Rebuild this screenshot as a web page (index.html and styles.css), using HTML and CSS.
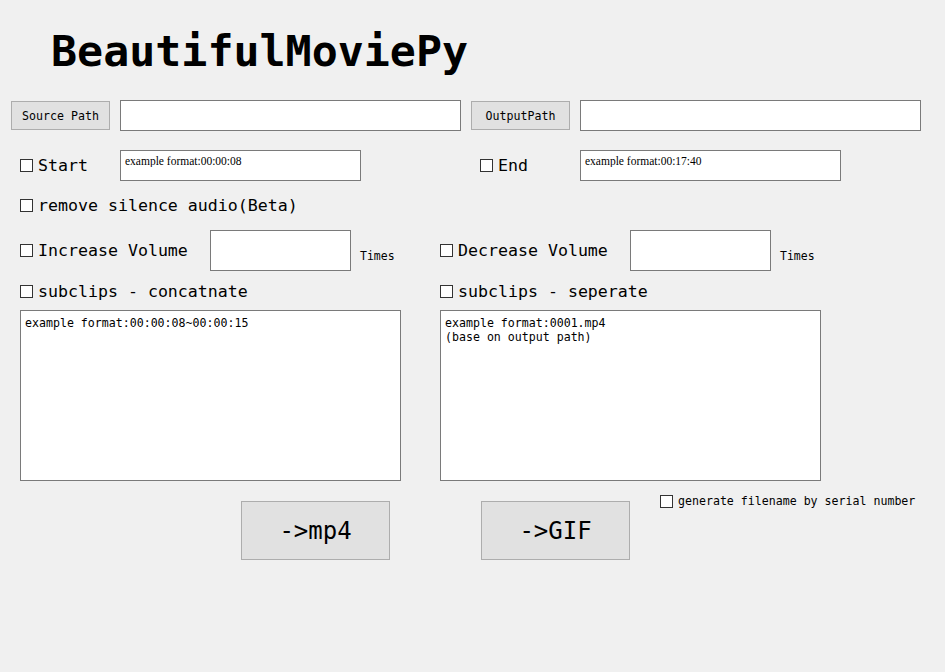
FILE: index.html
```html
<!DOCTYPE html>
<html lang="en">
<head>
<meta charset="utf-8">
<title>BeautifulMoviePy</title>
<link rel="stylesheet" href="styles.css">
</head>
<body>
<div class="window">
  <h1 class="title">BeautifulMoviePy</h1>

  <div class="row row-paths">
    <button class="btn-small">Source Path</button>
    <input class="field field-path" type="text">
    <button class="btn-small">OutputPath</button>
    <input class="field field-path" type="text">
  </div>

  <div class="row row-time">
    <label class="check check-time"><span class="box"></span><span class="lbl">Start</span></label>
    <input class="field field-time field-start" type="text" value="example format:00:00:08">
    <label class="check check-time check-end"><span class="box"></span><span class="lbl">End</span></label>
    <input class="field field-time field-end" type="text" value="example format:00:17:40">
  </div>

  <div class="row row-line">
    <label class="check"><span class="box"></span><span class="lbl">remove silence audio(Beta)</span></label>
  </div>

  <div class="row row-volume">
    <div class="half">
      <label class="check check-vol"><span class="box"></span><span class="lbl">Increase Volume</span></label>
      <input class="field field-vol" type="text">
      <span class="times">Times</span>
    </div>
    <div class="half">
      <label class="check check-vol"><span class="box"></span><span class="lbl">Decrease Volume</span></label>
      <input class="field field-vol" type="text">
      <span class="times">Times</span>
    </div>
  </div>

  <div class="row row-line row-sub">
    <div class="half">
      <label class="check"><span class="box"></span><span class="lbl">subclips - concatnate</span></label>
    </div>
    <div class="half">
      <label class="check"><span class="box"></span><span class="lbl">subclips - seperate</span></label>
    </div>
  </div>

  <div class="row row-areas">
    <div class="half">
      <textarea class="area">example format:00:00:08~00:00:15</textarea>
    </div>
    <div class="half">
      <textarea class="area">example format:0001.mp4
(base on output path)</textarea>
    </div>
  </div>

  <div class="row row-actions">
    <button class="btn-big">-&gt;mp4</button>
    <button class="btn-big">-&gt;GIF</button>
    <label class="check check-small"><span class="box"></span><span class="lbl">generate filename by serial number</span></label>
  </div>
</div>
</body>
</html>
```

FILE: styles.css
```css
* {
  box-sizing: border-box;
}

html, body {
  margin: 0;
  padding: 0;
  background: #f0f0f0;
}

.window {
  width: 945px;
  height: 672px;
  background: #f0f0f0;
  font-family: "DejaVu Sans Mono", "Liberation Mono", monospace;
  color: #000;
  overflow: hidden;
}

.title {
  margin: 30px 0 0 51px;
  height: 43px;
  font-size: 43.3px;
  line-height: 43px;
  font-weight: bold;
  letter-spacing: 0;
}

.row {
  display: flex;
  align-items: center;
}

.row-paths {
  margin-top: 27px;
  height: 31px;
  padding-left: 11px;
}

.btn-small {
  width: 99px;
  height: 29px;
  margin-right: 10px;
  background: #e1e1e1;
  border: 1px solid #adadad;
  border-radius: 0;
  font-family: "DejaVu Sans Mono", monospace;
  font-size: 11.6px;
  color: #000;
  padding: 0;
}

.field {
  background: #fff;
  border: 1px solid #7a7a7a;
  border-radius: 0;
  outline: none;
  margin: 0;
}

.field-path {
  width: 341px;
  height: 31px;
  margin-right: 10px;
}

.row-time {
  margin-top: 19px;
  height: 31px;
  padding-left: 20px;
}

.field-time {
  height: 31px;
  padding: 0 0 10px 4px;
  font-family: "Liberation Serif", serif;
  font-size: 11.5px;
  color: #000;
}

.field-start {
  width: 241px;
  margin-right: 119px;
}

.field-end {
  width: 261px;
}

.check {
  display: flex;
  align-items: center;
  gap: 5px;
  font-size: 16.6px;
}

.check-time {
  width: 100px;
}

.box {
  display: block;
  width: 13px;
  height: 13px;
  border: 1px solid #333;
  background: #fff;
  flex: none;
}

.row-line {
  margin-top: 14px;
  height: 20px;
  padding-left: 20px;
}

.row-sub {
  margin-top: 10px;
}

.half {
  width: 420px;
  display: flex;
  align-items: center;
  height: 100%;
}

.row-volume {
  margin-top: 15px;
  height: 41px;
  padding-left: 20px;
}

.check-vol {
  width: 190px;
}

.field-vol {
  width: 141px;
  height: 41px;
}

.times {
  align-self: flex-end;
  margin: 0 0 8px 9px;
  font-size: 11.5px;
}

.row-areas {
  margin-top: 9px;
  height: 171px;
  padding-left: 20px;
}

.area {
  width: 381px;
  height: 171px;
  resize: none;
  background: #fff;
  border: 1px solid #7a7a7a;
  border-radius: 0;
  outline: none;
  margin: 0;
  padding: 5px 4px;
  font-family: "DejaVu Sans Mono", monospace;
  font-size: 11.6px;
  line-height: 14px;
  color: #000;
  overflow: hidden;
}

.row-actions {
  align-items: flex-start;
  padding-left: 241px;
}

.btn-big {
  width: 149px;
  height: 59px;
  margin-top: 20px;
  background: #e1e1e1;
  border: 1px solid #adadad;
  border-radius: 0;
  font-family: "DejaVu Sans Mono", monospace;
  font-size: 24px;
  color: #000;
  padding: 0;
}

.btn-big + .btn-big {
  margin-left: 91px;
}

.check-small {
  margin: 13px 0 0 30px;
  font-size: 11.6px;
}
```
